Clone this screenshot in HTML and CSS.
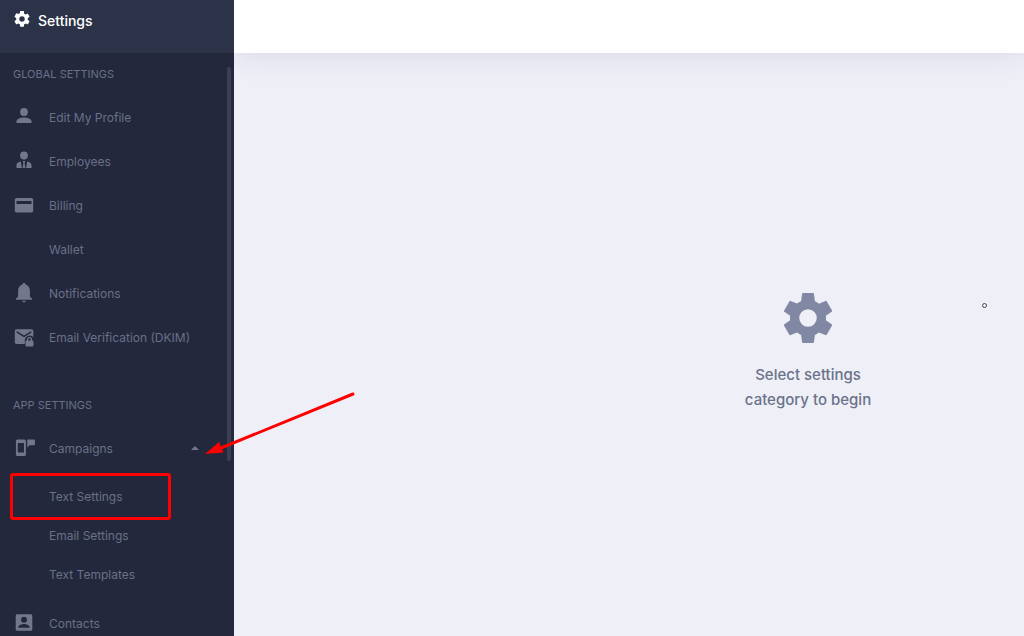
FILE: index.html
```html
<!DOCTYPE html>
<html lang="en">
<head>
  <meta charset="UTF-8">
  <meta name="viewport" content="width=device-width, initial-scale=1.0">
  <title>Settings</title>
  <link rel="stylesheet" href="styles.css">
</head>
<body>
  <div class="app">
    <aside class="sidebar">
      <header class="sidebar-header">
        <svg class="header-icon" viewBox="2 2 20 20"><path d="M19.14 12.94c.04-.3.06-.61.06-.94s-.02-.64-.07-.94l2.03-1.58a.49.49 0 0 0 .12-.61l-1.92-3.32a.49.49 0 0 0-.59-.22l-2.39.96a7 7 0 0 0-1.62-.94l-.36-2.54A.48.48 0 0 0 13.92 2h-3.84c-.24 0-.43.17-.47.41l-.36 2.54c-.59.24-1.13.57-1.62.94l-2.39-.96a.48.48 0 0 0-.59.22L2.74 8.87a.47.47 0 0 0 .12.61l2.03 1.58c-.05.3-.09.63-.09.94s.02.64.07.94l-2.03 1.58a.49.49 0 0 0-.12.61l1.92 3.32c.12.22.37.29.59.22l2.39-.96c.5.38 1.03.7 1.62.94l.36 2.54c.05.24.24.41.48.41h3.84c.24 0 .44-.17.47-.41l.36-2.54a7 7 0 0 0 1.62-.94l2.39.96c.22.08.47 0 .59-.22l1.92-3.32a.47.47 0 0 0-.12-.61zM12 15.4a3.4 3.4 0 1 1 0-6.8 3.4 3.4 0 0 1 0 6.8z"/></svg>
        <h1>Settings</h1>
      </header>

      <nav class="menu">
        <h2>GLOBAL SETTINGS</h2>
        <ul>
          <li><a href="#profile">
            <svg class="icon" viewBox="0 0 20 20"><circle cx="10" cy="5" r="3.9"/><path d="M2.5 16v-1.8c0-2.4 4.5-3.7 7.5-3.7s7.500 1.300 7.500 3.700V16z"/></svg>
            Edit My Profile</a></li>
          <li><a href="#employees">
            <svg class="icon" viewBox="0 0 20 20"><circle cx="10" cy="4.500" r="3.900"/><path d="M2.500 17v-3c0-2 2.200-3.100 4.200-3.600L8 17zM17.500 17v-3c0-2-2.200-3.100-4.200-3.600L12 17zM8.600 10h2.800l-.8 1.800.7 5.200H8.700l.7-5.200z"/></svg>
            Employees</a></li>
          <li><a href="#billing">
            <svg class="icon" viewBox="0 0 20 20"><path fill-rule="evenodd" d="M2.500 2.900h15a1.700 1.700 0 0 1 1.700 1.700v11.100a1.700 1.700 0 0 1-1.700 1.700h-15a1.700 1.700 0 0 1-1.700-1.700V4.600a1.700 1.700 0 0 1 1.700-1.700zM2.500 6v3h15V6z"/></svg>
            Billing</a></li>
          <li><a href="#wallet" class="no-icon">Wallet</a></li>
          <li><a href="#notifications">
            <svg class="icon" viewBox="0 0 20 20"><path d="M10 0c1 0 1.500.7 1.500 1.600 3.200.9 4.400 3.500 4.400 6.400v5.500l2.300 2.600v.7H1.800v-.7l2.300-2.600V8c0-2.900 1.200-5.500 4.400-6.400C8.500.7 9 0 10 0zM8.200 17.700h3.600a1.800 1.500 0 0 1-3.600 0z"/></svg>
            Notifications</a></li>
          <li><a href="#dkim">
            <svg class="icon" viewBox="0 0 20 20"><path fill-rule="evenodd" d="M2.500 2.200h15c1 0 1.800.8 1.800 1.700v6.200a5 5 0 0 0-8.500 3.600v3.200H2.500a1.700 1.700 0 0 1-1.700-1.700V3.900c0-.9.800-1.700 1.700-1.700zM2.700 4v1.800l7.300 4.500 7.300-4.500V4L10 8.500z"/><path fill-rule="evenodd" d="M12.900 13.500v-1a2.600 2.600 0 0 1 5.200 0v1c.8 0 1.400.5 1.400 1.200v3.600c0 .8-.6 1.300-1.300 1.300h-5.400c-.7 0-1.300-.5-1.300-1.300v-3.600c0-.7.600-1.200 1.400-1.200zm1.300 0h2.600v-1a1.300 1.300 0 0 0-2.600 0z"/></svg>
            Email Verification (DKIM)</a></li>
        </ul>

        <h2>APP SETTINGS</h2>
        <ul>
          <li>
            <a href="#campaigns">
              <svg class="icon wide" viewBox="0 0 20 20"><path fill-rule="evenodd" d="M3.500 1.500h6.800a1.600 1.600 0 0 1 1.600 1.600v13.400a1.600 1.600 0 0 1-1.600 1.600H3.500a1.600 1.600 0 0 1-1.600-1.600V3.100a1.600 1.600 0 0 1 1.600-1.600zM3.800 5v9.500H10V5z"/><path d="M14.100 1.500h6a.8.8 0 0 1 .8.800v4.200a.8.800 0 0 1-.8.800h-4.500l-2.300 2.200V2.300a.8.800 0 0 1 .8-.8z"/></svg>
              Campaigns
              <span class="caret"></span>
            </a>
            <ul class="submenu">
              <li><a href="#text-settings" class="marked">Text Settings</a></li>
              <li><a href="#email-settings">Email Settings</a></li>
              <li><a href="#text-templates">Text Templates</a></li>
            </ul>
          </li>
          <li><a href="#contacts">
            <svg class="icon" viewBox="0 0 20 20"><path fill-rule="evenodd" d="M3.300 1.200h13.400c.9 0 1.600.7 1.600 1.600v13.400c0 .9-.7 1.600-1.600 1.600H3.300c-.9 0-1.600-.7-1.600-1.600V2.800c0-.9.700-1.600 1.600-1.600zM10 3.800a3 3 0 1 0 0 6 3 3 0 0 0 0-6zM4.400 14.800h11.200v-.9c0-1.900-3.700-2.900-5.600-2.900s-5.600 1-5.600 2.900z"/></svg>
            Contacts</a></li>
        </ul>
      </nav>
      <div class="scroll-thumb"></div>
    </aside>

    <div class="content">
      <div class="topbar"></div>
      <main>
        <div class="empty">
          <svg class="gear" viewBox="2 2 20 20"><path d="M19.14 12.94c.04-.3.06-.61.06-.94s-.02-.64-.07-.94l2.33-1.6a.4.4 0 0 0 .1-.51l-2.1-3.6a.4.4 0 0 0-.5-.18l-2.58 1.08a7 7 0 0 0-1.62-.94l-.36-2.84A.46.46 0 0 0 13.92 2h-3.84c-.24 0-.43.17-.47.41l-.36 2.84c-.59.24-1.13.57-1.62.94L5.05 5.17a.4.4 0 0 0-.5.18l-2.1 3.6a.4.4 0 0 0 .1.51l2.32 1.6c-.05.3-.07.63-.07.94s.02.64.07.94l-2.32 1.6a.4.4 0 0 0-.1.51l2.1 3.6c.1.18.3.26.5.18l2.58-1.02c.5.38 1.03.7 1.62.94l.36 2.84c.05.24.24.41.48.41h3.84c.24 0 .44-.17.47-.41l.36-2.84a7 7 0 0 0 1.62-.94l2.58 1.02c.2.08.4 0 .5-.18l2.1-3.6a.4.4 0 0 0-.1-.51zM12 15.500a3.500 3.500 0 1 1 0-7 3.500 3.500 0 0 1 0 7z"/></svg>
          <p>Select settings<br>category to begin</p>
        </div>
      </main>
    </div>

    <svg class="arrow" viewBox="0 0 152 66"><path d="M148 4L16 58" fill="none" stroke="#f00" stroke-width="3" stroke-linecap="round"/><path d="M0 64L14 52l4.500 10.500z" fill="#f00"/></svg>
    <span class="dot"></span>
  </div>
</body>
</html>
```
FILE: styles.css
```css
* {
  box-sizing: border-box;
}
body {
  margin: 0;
  font-family: Inter, sans-serif;
  background: #eeeff7;
}
h1, h2, p, ul {
  margin: 0;
  padding: 0;
  font-weight: 400;
}
ul {
  list-style: none;
}
.app {
  position: relative;
  display: flex;
  height: 100vh;
  overflow: hidden;
}

/* sidebar */
.sidebar {
  position: relative;
  flex: none;
  width: 234px;
  background: #23283c;
  color: #6a7088;
  overflow: hidden;
}
.sidebar-header {
  display: flex;
  gap: 8px;
  height: 53px;
  padding: 11px 14px;
  background: #2c3248;
  color: #fff;
}
.sidebar-header h1 {
  font-size: 14px;
  line-height: 20px;
  font-weight: 500;
}
.header-icon {
  width: 16px;
  height: 16px;
  fill: #fff;
}
.menu h2 {
  margin: 11px 13px;
  font-size: 11px;
  line-height: 20px;
}
.menu > ul + h2 {
  margin-top: 36px;
}
.menu a {
  display: flex;
  align-items: center;
  gap: 15px;
  height: 44px;
  padding-left: 14px;
  color: inherit;
  font-size: 12px;
  text-decoration: none;
}
.menu a.no-icon {
  padding-left: 49px;
}
.icon {
  flex: none;
  width: 20px;
  height: 20px;
  fill: #73778b;
}
.icon.wide {
  overflow: visible;
}
.caret {
  margin-left: auto;
  margin-right: 35px;
  border: 4px solid transparent;
  border-top: 0;
  border-bottom-color: #73778b;
}
.submenu {
  padding: 7px 0;
}
.menu .submenu a {
  height: 39px;
  padding-left: 49px;
}
.marked {
  position: relative;
}
.marked::before {
  content: "";
  position: absolute;
  inset: -4px 63px -4px 10px;
  border: 3px solid #f00;
  border-radius: 3px;
}
.scroll-thumb {
  position: absolute;
  top: 67px;
  right: 3px;
  width: 4px;
  height: 394px;
  border-radius: 2px;
  background: #3a3f54;
}

/* content */
.content {
  flex: 1;
  display: flex;
  flex-direction: column;
}
.topbar {
  height: 53px;
  background: #fff;
  box-shadow: 0 0 32px rgba(40, 45, 70, 0.12);
}
main {
  flex: 1;
  display: grid;
  grid-template-columns: 358px 1fr;
}
.empty {
  grid-column: 2;
  padding-top: 240px;
  text-align: center;
  color: #6b7289;
}
.gear {
  display: block;
  width: 50px;
  height: 50px;
  margin: 0 auto 19px;
  fill: #8188a3;
}
.empty p {
  font-size: 15px;
  line-height: 25px;
  font-weight: 500;
}

/* pointer marks */
.arrow {
  position: absolute;
  top: 390px;
  left: 205px;
  width: 152px;
  height: 66px;
}
.dot {
  position: absolute;
  top: 303px;
  left: 982px;
  width: 5px;
  height: 5px;
  border: 1px solid #44464f;
  border-radius: 50%;
}
```
